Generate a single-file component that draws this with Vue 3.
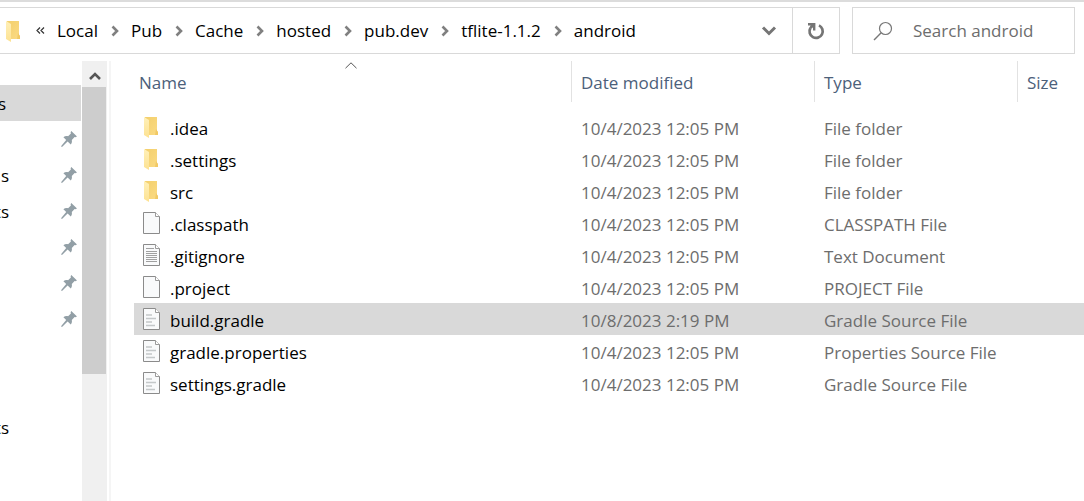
<script setup>
import { ref } from 'vue'

const crumbs = ['Local', 'Pub', 'Cache', 'hosted', 'pub.dev', 'tflite-1.1.2', 'android']

const places = [
  { label: 's', pinned: false, selected: true },
  { label: '', pinned: true },
  { label: 's', pinned: true },
  { label: 'ts', pinned: true },
  { label: '', pinned: true },
  { label: '', pinned: true },
  { label: '', pinned: true },
  { label: '', pinned: false },
  { label: '', pinned: false },
  { label: 'ts', pinned: false }
]

const files = [
  { name: '.idea', date: '10/4/2023 12:05 PM', type: 'File folder', icon: 'folder' },
  { name: '.settings', date: '10/4/2023 12:05 PM', type: 'File folder', icon: 'folder' },
  { name: 'src', date: '10/4/2023 12:05 PM', type: 'File folder', icon: 'folder' },
  { name: '.classpath', date: '10/4/2023 12:05 PM', type: 'CLASSPATH File', icon: 'blank' },
  { name: '.gitignore', date: '10/4/2023 12:05 PM', type: 'Text Document', icon: 'text' },
  { name: '.project', date: '10/4/2023 12:05 PM', type: 'PROJECT File', icon: 'blank' },
  { name: 'build.gradle', date: '10/8/2023 2:19 PM', type: 'Gradle Source File', icon: 'source' },
  { name: 'gradle.properties', date: '10/4/2023 12:05 PM', type: 'Properties Source File', icon: 'source' },
  { name: 'settings.gradle', date: '10/4/2023 12:05 PM', type: 'Gradle Source File', icon: 'source' }
]

const selected = ref('build.gradle')
const query = ref('')
</script>

<template>
  <div class="explorer">
    <svg class="defs" width="0" height="0" aria-hidden="true">
      <defs>
        <linearGradient id="folderBack" x1="0" y1="0" x2="1" y2="1">
          <stop offset="0" stop-color="#f3cf6c" />
          <stop offset="1" stop-color="#fbdb84" />
        </linearGradient>
        <linearGradient id="folderFront" x1="0" y1="0" x2="0" y2="1">
          <stop offset="0" stop-color="#fff0b8" />
          <stop offset="1" stop-color="#fde292" />
        </linearGradient>
      </defs>
      <symbol id="folder" viewBox="0 0 18 24">
        <path d="M2 2H14V16L15 17V20H3Z" fill="url(#folderBack)" />
        <path d="M13 14L15 17V20H12Z" fill="#f1c965" />
        <path d="M1 2L6 5V23L1 20Z" fill="url(#folderFront)" />
      </symbol>
      <symbol id="page" viewBox="0 0 18 24">
        <path d="M.5 1.5H12.5L16.5 5.5V22.5H.5Z" fill="#f9fafb" stroke="#8b8b8b" />
        <path d="M12.5 1.5V5.5H16.5" fill="#fff" stroke="#9b9b9b" />
      </symbol>
    </svg>

    <header class="toolbar">
      <nav class="address" aria-label="Address">
        <svg class="file-icon" width="18" height="24" aria-hidden="true"><use href="#folder" /></svg>
        <button class="crumb more" type="button" aria-label="Earlier folders">
          <svg width="9" height="7" viewBox="0 0 9 7"><path d="M4 .5L1 3.5L4 6.5M8 .5L5 3.5L8 6.5" fill="none" stroke="#333" stroke-width="1.2" /></svg>
        </button>
        <template v-for="(crumb, i) in crumbs" :key="crumb">
          <svg v-if="i" class="chevron" width="8" height="12" viewBox="0 0 8 12" aria-hidden="true">
            <path d="M1.5 1.5L6 6L1.5 10.5" fill="none" stroke="#808080" stroke-width="2.6" />
          </svg>
          <button class="crumb" type="button">{{ crumb }}</button>
        </template>
        <button class="tool history" type="button" aria-label="Previous locations">
          <svg width="16" height="10" viewBox="0 0 16 10"><path d="M2 1.5L8 7.5L14 1.5" fill="none" stroke="#757575" stroke-width="3" /></svg>
        </button>
        <button class="tool refresh" type="button" aria-label="Refresh">
          <svg width="18" height="18" viewBox="0 0 18 18">
            <path d="M12 3.4A6.6 6.6 0 1 1 3.4 6" fill="none" stroke="#757575" stroke-width="2.7" />
            <path d="M1 1H8.4V8.4H6V5.2L4.6 6.8L2.4 5.4L3.6 3.4H1Z" fill="#757575" />
          </svg>
        </button>
      </nav>
      <label class="search">
        <svg width="20" height="20" viewBox="0 0 20 20" aria-hidden="true">
          <circle cx="12.5" cy="7.5" r="6" fill="none" stroke="#777" stroke-width="1.2" />
          <path d="M8.2 11.8L1 19" fill="none" stroke="#777" stroke-width="1.4" />
        </svg>
        <input v-model="query" type="text" placeholder="Search android" aria-label="Search android" />
      </label>
    </header>

    <div class="content">
      <aside class="sidebar">
        <nav class="places" aria-label="Quick access">
          <button v-for="(place, i) in places" :key="i" type="button" class="place" :class="{ active: place.selected }" :aria-label="place.label || 'Folder'">
            <span class="place-name">{{ place.label }}</span>
            <svg v-if="place.pinned" width="16" height="16" viewBox="0 0 16 16" aria-hidden="true">
              <path d="M10.3 0L16 5.5L14.4 6.2L13.6 6L10.8 8.9C11.2 10.6 10.8 12.2 9.8 13.4L6.6 10.5L1 16L0 15.2L5.2 9L2.4 6.2C3.8 5 5.5 4.8 7.1 5.2L9.9 2.5L9.6 1.2Z" fill="#929fa6" />
            </svg>
          </button>
        </nav>
        <div class="scrollbar">
          <button class="scroll-up" type="button" aria-label="Scroll up">
            <svg width="12" height="10" viewBox="0 0 12 10"><path d="M1 8L6 3L11 8" fill="none" stroke="#555" stroke-width="2.6" /></svg>
          </button>
          <div class="thumb"></div>
        </div>
      </aside>

      <main class="listing">
        <table>
          <colgroup>
            <col />
            <col class="col-date" />
            <col class="col-type" />
            <col class="col-size" />
          </colgroup>
          <thead>
            <tr>
              <th scope="col" aria-sort="ascending">
                <button type="button">Name</button>
                <svg class="sort" width="12" height="7" viewBox="0 0 12 7" aria-hidden="true"><path d="M.5 6.2L6 .8L11.5 6.2" fill="none" stroke="#555" /></svg>
              </th>
              <th scope="col"><button type="button">Date modified</button></th>
              <th scope="col"><button type="button">Type</button></th>
              <th scope="col"><button type="button">Size</button></th>
            </tr>
          </thead>
          <tbody>
            <tr v-for="file in files" :key="file.name" :class="{ selected: selected === file.name }" @click="selected = file.name">
              <td>
                <div class="name">
                  <svg class="file-icon" width="18" height="24" viewBox="0 0 18 24" aria-hidden="true">
                    <use :href="file.icon === 'folder' ? '#folder' : '#page'" />
                    <path v-if="file.icon === 'text'" d="M3 5.5H11M3 8.5H14M3 10.5H14M3 12.5H14M3 14.5H14M3 16.5H14M3 18.5H14" stroke="#a0a0a0" />
                    <path v-if="file.icon === 'source'" d="M3 8H9M3 11.5H13M3 15H9M3 18.5H12" stroke="#c4c8c9" stroke-width="1.6" />
                  </svg>
                  <span>{{ file.name }}</span>
                </div>
              </td>
              <td>{{ file.date }}</td>
              <td>{{ file.type }}</td>
              <td></td>
            </tr>
          </tbody>
        </table>
      </main>
    </div>
  </div>
</template>

<style>
body {
  margin: 0;
  background: #fff;
}
</style>

<style scoped>
.explorer {
  display: flex;
  flex-direction: column;
  min-height: 100vh;
  overflow: hidden;
  font-family: "Open Sans", "Noto Sans", sans-serif;
  font-size: 17px;
  line-height: 24px;
  color: #000;
}
.defs {
  position: absolute;
}
button,
input {
  margin: 0;
  padding: 0;
  border: 0;
  background: none;
  font: inherit;
  color: inherit;
}
svg {
  display: block;
  flex: none;
}
.toolbar {
  display: flex;
  gap: 12px;
  padding: 5px 9px 7px 0;
  border-top: 2px solid #dcdcdc;
}
.address {
  display: flex;
  flex: 1;
  align-items: center;
  height: 45px;
  padding-left: 5px;
  border: 1px solid #d9d9d9;
  border-left: 0;
}
.crumb {
  white-space: nowrap;
}
.more {
  margin: 0 12px 0 13px;
}
.chevron {
  margin: 0 12px 0 13px;
}
.tool {
  display: flex;
  align-items: center;
  justify-content: center;
  align-self: stretch;
  width: 46px;
}
.history {
  margin-left: auto;
}
.refresh {
  width: 47px;
  border-left: 1px solid #d9d9d9;
}
.search {
  display: flex;
  align-items: center;
  gap: 20px;
  box-sizing: border-box;
  width: 223px;
  padding-left: 20px;
  border: 1px solid #d9d9d9;
}
.search input {
  flex: 1;
  min-width: 0;
  outline: none;
}
.search input::placeholder {
  color: #6d6d6d;
  opacity: 1;
}
.content {
  display: flex;
  flex: 1;
}
.sidebar {
  display: flex;
  width: 109px;
  border-right: 2px solid #f5f5f5;
}
.places {
  flex: 1;
  padding-top: 24px;
}
.place {
  display: flex;
  align-items: center;
  justify-content: space-between;
  width: 81px;
  height: 36px;
  padding-right: 4px;
}
.place.active {
  background: #d9d9d9;
}
.place-name {
  display: flex;
  justify-content: flex-end;
  width: 9px;
  padding-top: 2px;
}
.active .place-name {
  width: 6px;
}
.scrollbar {
  width: 25px;
  margin-right: 2px;
  background: #f0f0f0;
}
.scroll-up {
  display: flex;
  align-items: center;
  justify-content: center;
  width: 100%;
  height: 26px;
  padding-top: 3px;
}
.thumb {
  width: 24px;
  height: 287px;
  background: #cdcdcd;
}
.listing {
  flex: 1;
  min-width: 0;
  padding-left: 23px;
}
table {
  width: 100%;
  border-collapse: separate;
  border-spacing: 0;
  table-layout: fixed;
}
.col-date {
  width: 243px;
}
.col-type {
  width: 203px;
}
.col-size {
  width: 67px;
}
th {
  position: relative;
  box-sizing: border-box;
  height: 41px;
  padding: 2px 0 0 9px;
  border-left: 1px solid #e2e2e2;
  font-weight: 400;
  text-align: left;
  color: #4c607a;
}
th:first-child {
  padding-left: 5px;
  border-left: 0;
}
.sort {
  position: absolute;
  top: 1px;
  left: calc(50% - 8px);
}
tbody::before {
  content: "";
  display: block;
  height: 9px;
}
td {
  box-sizing: border-box;
  height: 32px;
  padding: 4px 0 0 10px;
  color: #6d6d6d;
  white-space: nowrap;
}
td:first-child {
  padding: 0 0 0 9px;
  color: #000;
}
.name {
  display: flex;
  align-items: center;
  gap: 9px;
}
.name span {
  padding-top: 4px;
}
.selected td {
  background: #d9d9d9;
}
</style>
